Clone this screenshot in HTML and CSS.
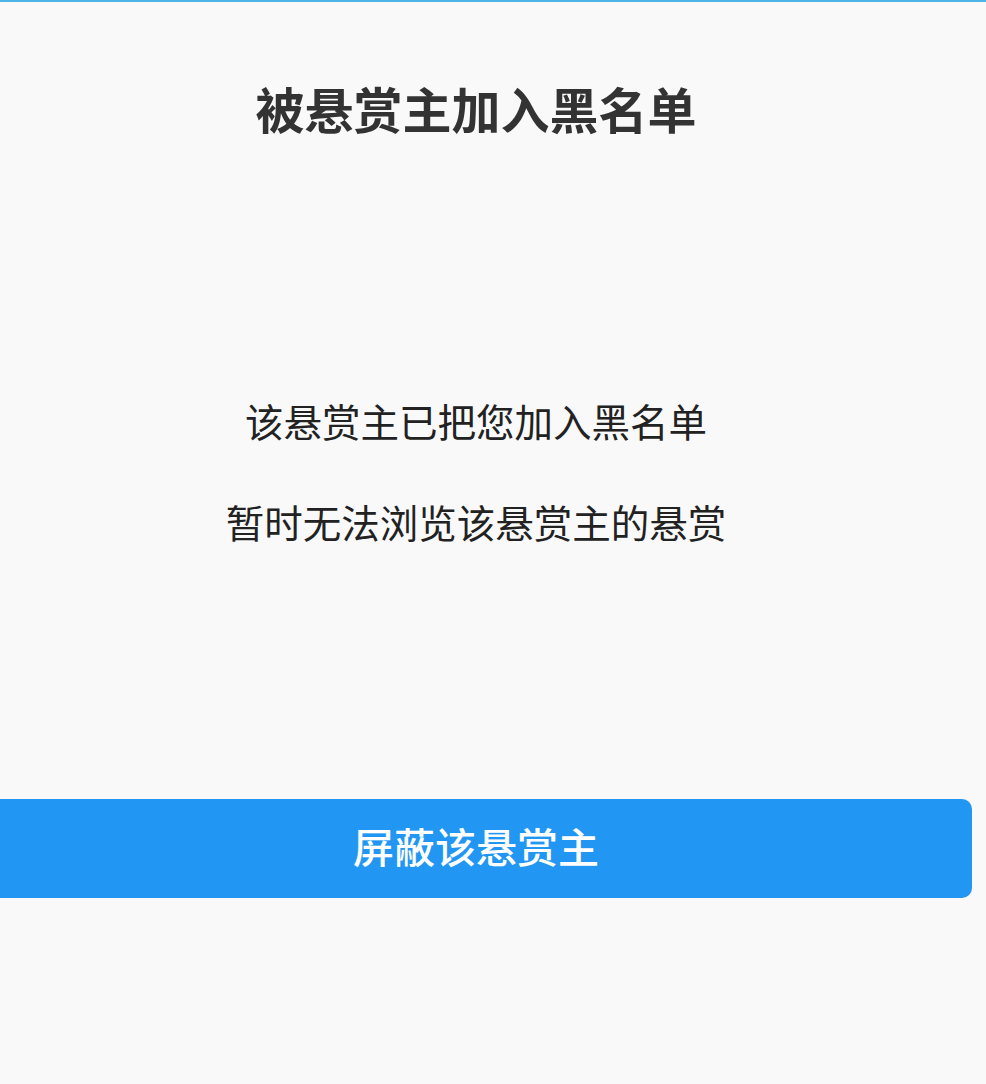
FILE: index.html
```html
<!DOCTYPE html>
<html lang="zh-CN">
<head>
<meta charset="utf-8">
<link rel="stylesheet" href="styles.css">
</head>
<body>
<div class="topbar"></div>
<main class="page">
  <h1 class="title">被悬赏主加入黑名单</h1>
  <div class="message">
    <p class="line">该悬赏主已把您加入黑名单</p>
    <p class="line">暂时无法浏览该悬赏主的悬赏</p>
  </div>
  <button class="btn">屏蔽该悬赏主</button>
</main>
</body>
</html>
```
FILE: styles.css
```css
html, body {
  margin: 0;
  padding: 0;
  background: #f9f9f9;
}
body {
  width: 986px;
  height: 1084px;
  overflow: hidden;
  font-family: "Noto Sans CJK SC", "Noto Sans", sans-serif;
}
.topbar {
  height: 2px;
  background: #4fb5e6;
}
.page {
  width: 952px;
  display: flex;
  flex-direction: column;
  align-items: center;
}
.title {
  margin: 76px 0 0;
  font-size: 49px;
  line-height: 60px;
  font-weight: 700;
  color: #333333;
}
.message {
  margin-top: 232px;
  display: flex;
  flex-direction: column;
  align-items: center;
}
.line {
  margin: 0;
  font-size: 38.5px;
  line-height: 101px;
  color: #222222;
}
.btn {
  margin-top: 227px;
  align-self: flex-start;
  margin-left: -20px;
  width: 992px;
  height: 99px;
  border: none;
  border-radius: 10px;
  background: #2196f3;
  color: #ffffff;
  font-family: "Noto Sans CJK SC", "Noto Sans", sans-serif;
  font-size: 41px;
  font-weight: 500;
  line-height: 93px;
  padding: 0 0 6px;
  letter-spacing: 0;
}
```
